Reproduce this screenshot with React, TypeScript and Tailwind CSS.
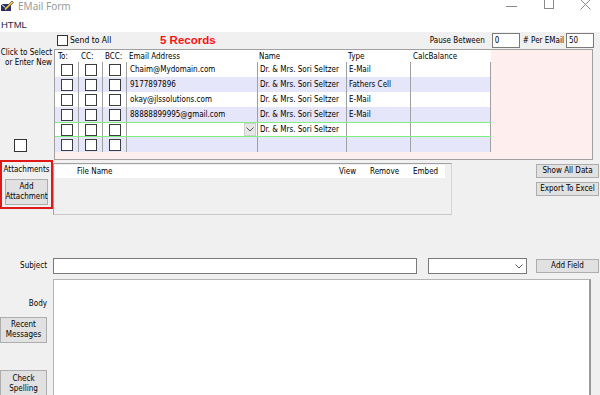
import React from "react";

const F = "font-['DejaVu_Sans_Condensed','Liberation_Sans',sans-serif]";

const Box = ({ cls = "" }: { cls?: string }) => (
  <div className={`w-[12px] h-[12px] border border-[#3c3c3c] bg-white shrink-0 ${cls}`} />
);

const Btn = ({ children, cls = "" }: { children: React.ReactNode; cls?: string }) => (
  <div className={`flex items-center justify-center text-center bg-[#e1e1e1] border border-[#adadad] leading-[10px] ${cls}`}>
    {children}
  </div>
);

const rows = [
  { email: "Chaim@Mydomain.com", name: "Dr. & Mrs. Sori Seltzer", type: "E-Mail", bg: "bg-white", green: false, dd: false },
  { email: "9177897896", name: "Dr. & Mrs. Sori Seltzer", type: "Fathers Cell", bg: "bg-[#e6e6fa]", green: false, dd: false },
  { email: "okay@jlssolutions.com", name: "Dr. & Mrs. Sori Seltzer", type: "E-Mail", bg: "bg-white", green: false, dd: false },
  { email: "88888899995@gmail.com", name: "Dr. & Mrs. Sori Seltzer", type: "E-Mail", bg: "bg-[#e6e6fa]", green: false, dd: false },
  { email: "", name: "Dr. & Mrs. Sori Seltzer", type: "", bg: "bg-white", green: true, dd: true },
  { email: "", name: "", type: "", bg: "bg-[#e6e6fa]", green: false, dd: false },
];

const Chevron = () => (
  <svg width="8" height="5" viewBox="0 0 8 5">
    <path d="M0.5 0.5 L4 4 L7.5 0.5" fill="none" stroke="#555" strokeWidth="1" />
  </svg>
);

export default function App() {
  return (
    <div className={`w-[600px] h-[395px] overflow-hidden bg-[#f0f0f0] text-black text-[8px] ${F} flex flex-col`}>
      {/* title bar */}
      <div className="h-[14px] bg-white flex items-center shrink-0 relative">
        <svg width="14" height="13" viewBox="0 0 14 13" className="ml-[0px] -mt-[2px]">
          <rect x="1" y="4" width="10" height="7" fill="#2a2f6e" />
          <path d="M1 4 L6 8 L11 4" fill="none" stroke="#ffffff" strokeWidth="1" />
          <path d="M4 9 L12 1 L13.5 2.5 L5.5 10.5 Z" fill="#e8c23a" stroke="#3a3a3a" strokeWidth="0.6" />
          <path d="M4 9 L3.2 11.3 L5.5 10.5 Z" fill="#222" />
        </svg>
        <span className="ml-[4px] text-[10px] text-[#9a9a9a] font-['Noto_Sans',sans-serif] -mt-[1px]">EMail Form</span>
        <div className="ml-auto flex items-center h-full -mt-[4px]">
          <div className="w-[11px] h-[1px] bg-[#8a8a8a] mr-[27px] mt-[2px]" />
          <div className="w-[10px] h-[10px] border border-[#8a8a8a] mr-[26px] -mt-[2px]" />
          <svg width="11" height="11" viewBox="0 0 11 11" className="mr-[9px] -mt-[2px]">
            <path d="M0.5 0.5 L10.5 10.5 M10.5 0.5 L0.5 10.5" stroke="#8a8a8a" strokeWidth="1" />
          </svg>
        </div>
      </div>
      {/* menu */}
      <div className="h-[18px] bg-white flex items-center shrink-0 pt-[4px]">
        <span className="ml-[1px] text-[9.5px] text-[#22264a] font-['Liberation_Sans',sans-serif]">HTML</span>
      </div>
      {/* top row */}
      <div className="h-[17px] flex items-center shrink-0">
        <div className="w-[57px] shrink-0" />
        <div className="w-[103px] shrink-0 flex items-center">
          <div className="w-[11px] h-[11px] border border-[#333] bg-white" />
          <span className="ml-[2px] text-[8.5px]">Send to All</span>
        </div>
        <span className="text-[11.5px] font-bold text-[#ff1010] font-['Liberation_Sans',sans-serif]">5 Records</span>
        <div className="ml-auto flex items-center">
          <span className="mr-[7px]">Pause Between</span>
          <div className="w-[28px] h-[15px] bg-white border border-[#7a7a7a] pl-[2px] flex items-center">0</div>
          <span className="ml-[3px] mr-[2px]"># Per EMail</span>
          <div className="w-[28px] h-[15px] bg-white border border-[#7a7a7a] pl-[2px] flex items-center mr-[6px]">50</div>
        </div>
      </div>
      {/* grid row */}
      <div className="h-[111px] flex shrink-0">
        <div className="w-[54px] shrink-0 flex flex-col">
          <div className="flex flex-col items-end pr-[2px] leading-[10px] -mt-[1px] whitespace-nowrap">
            <span>Click to Select</span>
            <span>or Enter New</span>
          </div>
          <div className="mt-auto mb-[8px] ml-[14px] w-[13px] h-[13px] border border-[#333] bg-white" />
        </div>
        <div className="w-[539px] h-full border border-[#a0a0a0] bg-[#ffeeee] flex flex-col">
          <div className="w-[436px] flex flex-col">
            <div className="h-[12px] bg-white flex items-end pb-[0px] leading-[10px]">
              <div className="w-[23px] pl-[3px]">To:</div>
              <div className="w-[24px] pl-[3px]">CC:</div>
              <div className="w-[24px] pl-[3px]">BCC:</div>
              <div className="w-[131px] pl-[3px]">Email Address</div>
              <div className="w-[89px] pl-[2px]">Name</div>
              <div className="w-[64px] pl-[2px]">Type</div>
              <div className="w-[81px] pl-[3px]">CalcBalance</div>
            </div>
            {rows.map((r, i) => (
              <div
                key={i}
                className={`h-[15px] flex ${r.bg} ${r.green ? "border-y border-[#7ff07f]" : ""}`}
              >
                <div className="w-[23px] flex items-center justify-center"><Box /></div>
                <div className="w-[24px] border-l border-[#a0a0a0] flex items-center justify-center"><Box /></div>
                <div className="w-[24px] border-l border-[#a0a0a0] flex items-center justify-center"><Box /></div>
                <div className="w-[131px] border-l border-[#a0a0a0] flex items-center pl-[3px]">
                  <span className="whitespace-nowrap overflow-hidden">{r.email}</span>
                  {r.dd && (
                    <div className="ml-auto mr-[1px] w-[12px] h-[13px] bg-[#e6e6e6] border border-[#cfcfcf] flex items-center justify-center">
                      <Chevron />
                    </div>
                  )}
                </div>
                <div className="w-[89px] border-l border-[#a0a0a0] flex items-center pl-[2px] whitespace-nowrap overflow-hidden">{r.name}</div>
                <div className="w-[64px] border-l border-[#a0a0a0] flex items-center pl-[2px] whitespace-nowrap">{r.type}</div>
                <div className="w-[81px] border-l border-r border-[#a0a0a0]" />
              </div>
            ))}
          </div>
        </div>
      </div>
      {/* attachments row */}
      <div className="h-[55px] flex shrink-0">
        <div className="w-[53px] h-[49px] border-2 border-[#e01818] flex flex-col items-center shrink-0">
          <div className="mt-[3px] leading-[10px]">Attachments</div>
          <Btn cls="mt-[4px] w-[43px] h-[26px]">
            <span>Add<br />Attachment</span>
          </Btn>
        </div>
        <div className="mt-[3px] w-[399px] h-[52px] border-l border-t border-[#a0a0a0] border-r border-b border-r-[#d4d4d4] border-b-[#c8c8c8] flex flex-col">
          <div className="mt-[1px] ml-[1px] w-[390px] h-[13px] bg-white flex items-center">
            <div className="w-[22px]" />
            <div className="w-[262px]">File Name</div>
            <div className="w-[31px]">View</div>
            <div className="w-[43px]">Remove</div>
            <div>Embed</div>
          </div>
        </div>
        <div className="ml-auto mr-[1px] pt-[4px] flex flex-col gap-[4px]">
          <Btn cls="w-[63px] h-[14px]">Show All Data</Btn>
          <Btn cls="w-[63px] h-[14px]">Export To Excel</Btn>
        </div>
      </div>
      <div className="h-[43px] shrink-0" />
      {/* subject row */}
      <div className="h-[16px] flex items-center shrink-0">
        <div className="w-[48px] text-right pr-[1px]">Subject</div>
        <div className="ml-[5px] w-[364px] h-[16px] bg-white border border-[#7a7a7a]" />
        <div className="ml-[11px] w-[99px] h-[16px] bg-white border border-[#7a7a7a] flex items-center justify-end pr-[3px]">
          <Chevron />
        </div>
        <Btn cls="ml-auto mr-[1px] w-[63px] h-[14px]">Add Field</Btn>
      </div>
      <div className="h-[5px] shrink-0" />
      {/* body row */}
      <div className="flex-1 flex">
        <div className="w-[53px] shrink-0 flex flex-col">
          <div className="mt-[20px] text-right pr-[6px] leading-[10px]">Body</div>
          <Btn cls="mt-[8px] w-[47px] h-[26px]">
            <span>Recent<br />Messages</span>
          </Btn>
          <Btn cls="mt-[27px] w-[47px] h-[28px]">
            <span>Check<br />Spelling</span>
          </Btn>
        </div>
        <div className="w-[538px] h-[130px] bg-white border border-[#b4b4b4] border-r-2 border-r-[#9a9a9a]" />
      </div>
    </div>
  );
}
